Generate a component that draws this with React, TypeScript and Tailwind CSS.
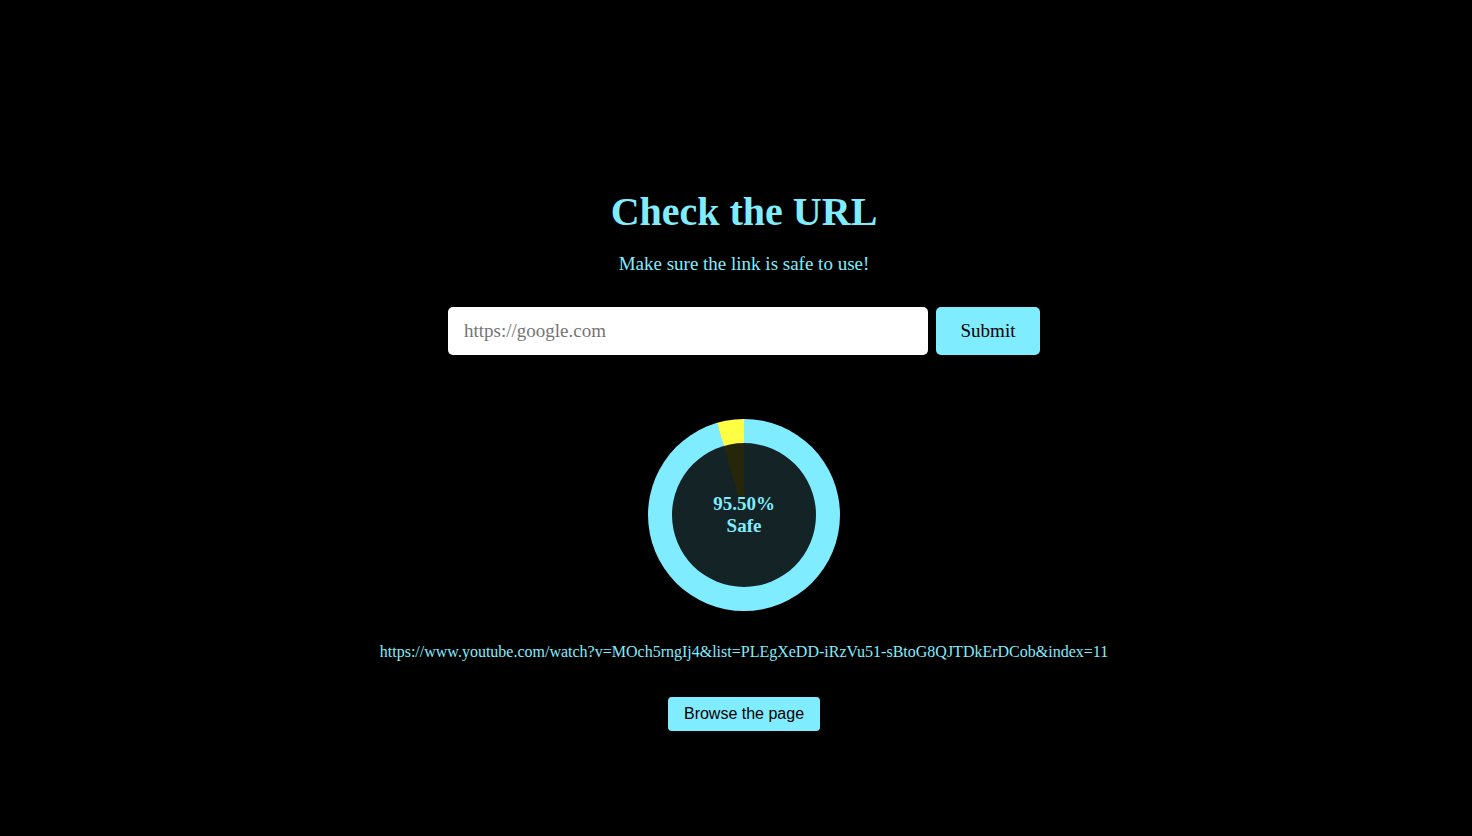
const SAFE = 95.5;

const App = () => {
  return (
    <div className="min-h-screen bg-black flex flex-col items-center pt-[189px] pl-4 font-['Liberation_Serif',serif] text-[#80ecff]">
      <h1 className="text-[40px] leading-[46px] font-bold">Check the URL</h1>
      <p className="mt-[18px] text-[19px] leading-[22px]">Make sure the link is safe to use!</p>

      <form className="mt-[32px] flex gap-2" onSubmit={(e) => e.preventDefault()}>
        <input
          type="text"
          placeholder="https://google.com"
          className="w-[480px] h-12 rounded-[5px] bg-white px-4 text-[19px] text-black placeholder:text-[#757575] outline-none"
        />
        <button
          type="submit"
          className="w-[104px] h-12 rounded-[5px] bg-[#80ecff] text-[19px] text-black"
        >
          Submit
        </button>
      </form>

      <div className="mt-[64px] w-[192px] h-[192px] rounded-full bg-[conic-gradient(#80ecff_0_95.5%,#ffff44_95.5%_100%)] flex items-center justify-center">
        <div className="w-[144px] h-[144px] rounded-full bg-black/85 flex flex-col items-center justify-center text-[19px] leading-[22px] font-bold">
          <span>{SAFE.toFixed(2)}%</span>
          <span>Safe</span>
        </div>
      </div>

      <p className="mt-[32px] text-[16px] leading-[18px]">
        https://www.youtube.com/watch?v=MOch5rngIj4&amp;list=PLEgXeDD-iRzVu51-sBtoG8QJTDkErDCob&amp;index=11
      </p>

      <button className="mt-[36px] w-[152px] h-[34px] rounded-[4px] bg-[#80ecff] text-black text-[16px] font-['Liberation_Sans',Arial,sans-serif]">
        Browse the page
      </button>
    </div>
  );
};

export default App;
